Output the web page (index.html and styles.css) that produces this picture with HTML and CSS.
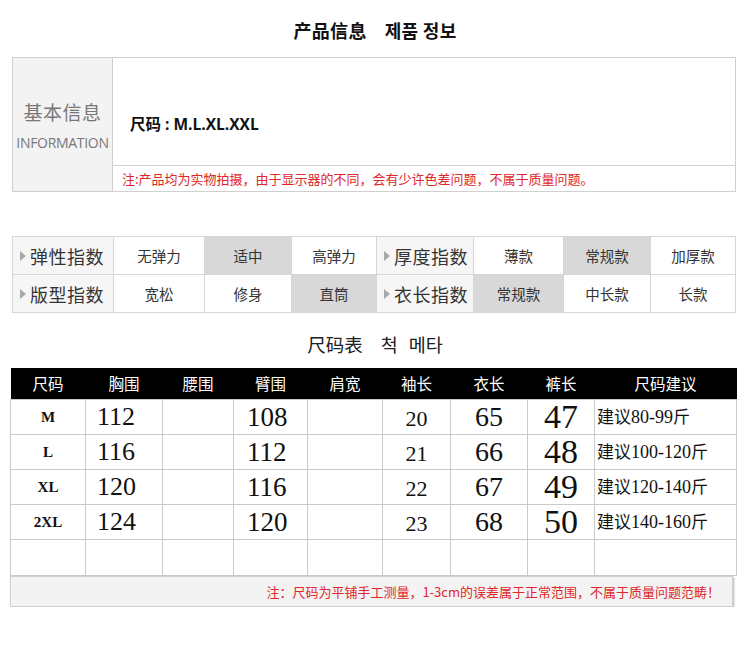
FILE: index.html
```html
<!DOCTYPE html>
<html lang="zh">
<head>
<meta charset="utf-8">
<title>产品信息</title>
<link rel="stylesheet" href="styles.css">
</head>
<body>
<div class="page">
  <h1 class="title">产品信息<span class="gap"></span>제품 정보</h1>

  <div class="info">
    <div class="info-label">
      <div class="info-cn">基本信息</div>
      <div class="info-en">INFORMATION</div>
    </div>
    <div class="info-main">
      <div class="info-size">尺码 : M.L.XL.XXL</div>
    </div>
    <div class="info-note">注:产品均为实物拍摄，由于显示器的不同，会有少许色差问题，不属于质量问题。</div>
  </div>

  <table class="index">
    <colgroup>
      <col class="c-l1"><col class="c-v1"><col class="c-v2"><col class="c-v3">
      <col class="c-l2"><col class="c-v4"><col class="c-v5"><col class="c-v6">
    </colgroup>
    <tr class="r1">
      <th>弹性指数</th><td>无弹力</td><td class="on">适中</td><td>高弹力</td>
      <th>厚度指数</th><td>薄款</td><td class="on">常规款</td><td>加厚款</td>
    </tr>
    <tr class="r2">
      <th>版型指数</th><td>宽松</td><td>修身</td><td class="on">直筒</td>
      <th>衣长指数</th><td class="on">常规款</td><td>中长款</td><td>长款</td>
    </tr>
  </table>

  <h2 class="subtitle">尺码表<span class="gap"></span>척<span class="gap2"></span>메타</h2>

  <table class="sizes">
    <colgroup>
      <col class="s1"><col class="s2"><col class="s3"><col class="s4"><col class="s5">
      <col class="s6"><col class="s7"><col class="s8"><col class="s9">
    </colgroup>
    <thead>
      <tr>
        <th>尺码</th><th>胸围</th><th>腰围</th><th>臂围</th><th>肩宽</th>
        <th>袖长</th><th>衣长</th><th>裤长</th><th>尺码建议</th>
      </tr>
    </thead>
    <tbody>
      <tr>
        <td class="sz">M</td><td class="bust">112</td><td></td><td class="hip">108</td><td></td>
        <td class="sleeve">20</td><td class="len">65</td><td class="pants">47</td><td class="rec">建议<span class="num">80-99</span>斤</td>
      </tr>
      <tr>
        <td class="sz">L</td><td class="bust">116</td><td></td><td class="hip">112</td><td></td>
        <td class="sleeve">21</td><td class="len">66</td><td class="pants">48</td><td class="rec">建议<span class="num">100-120</span>斤</td>
      </tr>
      <tr>
        <td class="sz">XL</td><td class="bust">120</td><td></td><td class="hip">116</td><td></td>
        <td class="sleeve">22</td><td class="len">67</td><td class="pants">49</td><td class="rec">建议<span class="num">120-140</span>斤</td>
      </tr>
      <tr>
        <td class="sz">2XL</td><td class="bust">124</td><td></td><td class="hip">120</td><td></td>
        <td class="sleeve">23</td><td class="len">68</td><td class="pants">50</td><td class="rec">建议<span class="num">140-160</span>斤</td>
      </tr>
      <tr class="empty">
        <td></td><td></td><td></td><td></td><td></td><td></td><td></td><td></td><td></td>
      </tr>
    </tbody>
  </table>

  <div class="note">注：尺码为平铺手工测量，1-3cm的误差属于正常范围，不属于质量问题范畴！</div>
</div>
</body>
</html>
```

FILE: styles.css
```css
* { box-sizing: border-box; }

body {
  margin: 0;
  background: #ffffff;
  font-family: "Noto Sans CJK SC", "Noto Sans", sans-serif;
  color: #222;
}

.page {
  width: 750px;
  padding-top: 19px;
}

.gap {
  display: inline-block;
  width: 18px;
}

.gap2 {
  display: inline-block;
  width: 11px;
}

.title {
  margin: 0;
  height: 38px;
  font-size: 18px;
  line-height: 22px;
  font-weight: bold;
  text-align: center;
  color: #111;
  letter-spacing: 0.3px;
}

/* ---------- info box ---------- */
.info {
  margin-left: 12px;
  width: 724px;
  height: 135px;
  border: 1px solid #cfcfcf;
  display: grid;
  grid-template-columns: 100px 1fr;
  grid-template-rows: 108px 1fr;
}

.info-label {
  grid-row: 1 / 3;
  background: #f3f3f3;
  border-right: 1px solid #cfcfcf;
  display: flex;
  flex-direction: column;
  align-items: center;
  padding-top: 41px;
  color: #777;
}

.info-cn {
  font-size: 19px;
  line-height: 26px;
  letter-spacing: 0.5px;
}

.info-en {
  margin-top: 9px;
  font-family: "Open Sans", "Liberation Sans", sans-serif;
  font-size: 14px;
  line-height: 18px;
  letter-spacing: -0.3px;
}

.info-main {
  border-bottom: 1px solid #cfcfcf;
  padding: 56px 0 0 17px;
}

.info-size {
  font-size: 15.5px;
  font-weight: bold;
  line-height: 20px;
  color: #111;
  font-family: "Open Sans", "Noto Sans CJK SC", sans-serif;
}

.info-note {
  padding-left: 9px;
  font-size: 13px;
  line-height: 25px;
  color: #e0262b;
}

/* ---------- index table ---------- */
.index {
  margin: 44px 0 0 12px;
  width: 723px;
  table-layout: fixed;
  border-collapse: collapse;
}

.index .c-l1 { width: 101px; }
.index .c-v1 { width: 91px; }
.index .c-v2 { width: 87px; }
.index .c-v3 { width: 85px; }
.index .c-l2 { width: 97px; }
.index .c-v4 { width: 90px; }
.index .c-v5 { width: 87px; }
.index .c-v6 { width: 85px; }

.index th,
.index td {
  border: 1px solid #d6d6d6;
  padding: 0;
  text-align: center;
  vertical-align: middle;
  color: #333;
}

.index .r1 { height: 38px; }
.index .r2 { height: 38px; }

.index th {
  background: #f6f6f6;
  font-weight: normal;
  font-size: 18px;
  text-align: left;
  padding-left: 17px;
  position: relative;
  letter-spacing: 0.5px;
}

.index th::before {
  content: "";
  position: absolute;
  left: 7px;
  top: 50%;
  margin-top: -5px;
  border-style: solid;
  border-width: 5px 0 5px 6px;
  border-color: transparent transparent transparent #a9a9a9;
}

.index td {
  font-size: 14.5px;
  background: #ffffff;
}

.index td.on { background: #d8d8d8; }

/* ---------- size table ---------- */
.subtitle {
  margin: 0;
  height: 55px;
  padding-top: 20px;
  font-size: 18.5px;
  line-height: 22px;
  font-weight: normal;
  text-align: center;
  color: #222;
}

.sizes {
  margin-left: 10px;
  width: 726px;
  table-layout: fixed;
  border-collapse: collapse;
}

.sizes .s1 { width: 75px; }
.sizes .s2 { width: 77px; }
.sizes .s3 { width: 71px; }
.sizes .s4 { width: 74px; }
.sizes .s5 { width: 75px; }
.sizes .s6 { width: 68px; }
.sizes .s7 { width: 77px; }
.sizes .s8 { width: 67px; }
.sizes .s9 { width: 142px; }

.sizes thead tr { height: 31px; }

.sizes th {
  background: #000;
  color: #fff;
  font-weight: normal;
  font-size: 15.5px;
  line-height: 20px;
  padding: 0;
  text-align: center;
  vertical-align: middle;
  border: none;
}

.sizes tbody tr { height: 35px; }
.sizes tbody tr.empty { height: 36px; }

.sizes td {
  border: 1px solid #cbcbcb;
  padding: 0;
  height: 35px;
  text-align: center;
  vertical-align: middle;
  font-family: "Liberation Serif", "DejaVu Serif", serif;
  color: #111;
  line-height: 24px;
  white-space: nowrap;
}

.sizes td.sz {
  font-weight: bold;
  font-size: 15px;
}

.sizes td.bust {
  font-size: 26px;
  text-align: left;
  padding-left: 11px;
}

.sizes td.hip {
  font-size: 27px;
  text-align: left;
  padding-left: 13px;
}

.sizes td.sleeve {
  font-size: 22px;
  padding-top: 4px;
}

.sizes td.len { font-size: 28px; }

.sizes td.pants {
  font-size: 34px;
  line-height: 30px;
}

.sizes td.rec {
  text-align: left;
  padding-left: 2px;
  font-family: "Noto Sans CJK SC", sans-serif;
  font-size: 17px;
}

.sizes td.rec .num {
  font-family: "Liberation Serif", serif;
  font-size: 18px;
}

/* ---------- bottom note ---------- */
.note {
  margin-left: 10px;
  width: 723px;
  height: 31px;
  background: #f3f3f3;
  border: 1px solid #d0d0d0;
  box-shadow: 1px 1px 2px #b5b5b5;
  text-align: right;
  padding-right: 12px;
  font-size: 13px;
  line-height: 29px;
  color: #e0262b;
}
```
